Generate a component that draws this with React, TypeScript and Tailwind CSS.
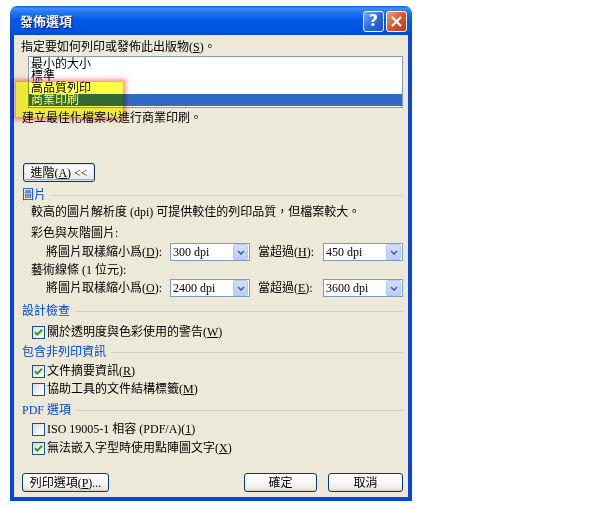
import type { ReactNode } from 'react'

const face = "font-['Liberation_Serif','Noto_Sans_CJK_TC',serif]"

function U({ children }: { children: ReactNode }) {
  return <span className="underline underline-offset-[1px]">{children}</span>
}

function XpButton({ children, className = '', focused = false }: { children: ReactNode; className?: string; focused?: boolean }) {
  return (
    <div
      className={`flex h-[19px] items-center justify-center rounded-[3px] border border-[#003C74] bg-[linear-gradient(to_bottom,#FFFFFF,#F6F6F2_55%,#ECEBE6_85%,#D6D0C5)] ${
        focused ? 'shadow-[inset_0_0_0_1px_#CEE7FF,inset_0_-2px_0_0_#89ADE4]' : ''
      } ${className}`}
    >
      {children}
    </div>
  )
}

function Heading({ children }: { children: ReactNode }) {
  return (
    <div className="flex h-[14px] items-center gap-[5px] text-[#0046D5]">
      <span>{children}</span>
      <div className="h-px flex-1 bg-[#D0D0BF]" />
    </div>
  )
}

function Check({ checked, children, className = '' }: { checked: boolean; children: ReactNode; className?: string }) {
  return (
    <div className={`flex h-[14px] items-center gap-[2px] pl-[10px] ${className}`}>
      <div className="flex h-[13px] w-[13px] items-center justify-center border border-[#1C5180] bg-[linear-gradient(135deg,#DCDCD7,#FFFFFF)]">
        {checked && (
          <svg width="11" height="11" viewBox="0 0 11 11">
            <path d="M2 5.2 L4.3 7.6 L9 2.8" fill="none" stroke="#21A121" strokeWidth="2" />
          </svg>
        )}
      </div>
      <span>{children}</span>
    </div>
  )
}

function Combo({ value }: { value: string }) {
  return (
    <div className="flex h-[18px] w-[80px] items-center border border-[#7F9DB9] bg-white">
      <span className="flex-1 pl-[2px]">{value}</span>
      <div className="mr-px flex h-[16px] w-[15px] items-center justify-center rounded-[2px] border border-[#B4C8F6] bg-[linear-gradient(to_bottom,#D2DFFD,#B9CEFA)]">
        <svg width="8" height="5" viewBox="0 0 8 5">
          <path d="M1 1 L4 4 L7 1" fill="none" stroke="#4D6185" strokeWidth="1.6" />
        </svg>
      </div>
    </div>
  )
}

function ResampleRow({ letter, from, over, overLetter }: { letter: string; from: string; over: string; overLetter: string }) {
  return (
    <div className="flex h-[18px] items-center pl-[24px]">
      <span className="w-[124px]">
        將圖片取樣縮小爲(<U>{letter}</U>):
      </span>
      <Combo value={from} />
      <span className="ml-[8px] w-[65px]">
        當超過(<U>{overLetter}</U>):
      </span>
      <Combo value={over} />
    </div>
  )
}

export default function App() {
  const items = ['最小的大小', '標準', '高品質列印', '商業印刷']

  return (
    <div className={`relative h-[508px] w-[616px] bg-white text-[12px] leading-[14px] text-black ${face}`}>
      <div className="ml-[10px] flex w-[402px] flex-col pt-[6px]">
        {/* title bar */}
        <div className="flex h-[29px] items-center rounded-t-[7px] bg-[linear-gradient(to_bottom,#0A5FE8_0%,#3D8EF9_8%,#2474F2_22%,#0058E6_50%,#0054E3_85%,#0046CE_100%)] pl-[10px] pr-[5px]">
          <span className="mt-[1px] flex-1 font-['Noto_Sans_CJK_TC',sans-serif] text-[13px] font-bold text-white [text-shadow:1px_1px_0_#0A1883]">
            發佈選項
          </span>
          <div className="mt-[1px] flex gap-[2px]">
            <div className="flex h-[21px] w-[21px] items-center justify-center rounded-[3px] border border-white bg-[linear-gradient(135deg,#7CA9FA,#2A66E2_55%,#1B4FD0)] font-['DejaVu_Sans',sans-serif] text-[16px] font-bold leading-none text-white">
              ?
            </div>
            <div className="flex h-[21px] w-[21px] items-center justify-center rounded-[3px] border border-white bg-[linear-gradient(135deg,#EE9B74,#DA5128_55%,#C23A18)]">
              <svg width="13" height="13" viewBox="0 0 13 13">
                <path d="M2 2 L11 11 M11 2 L2 11" stroke="white" strokeWidth="2.2" />
              </svg>
            </div>
          </div>
        </div>

        {/* body */}
        <div className="flex flex-col border-x-4 border-b-4 border-[#0A46DB] bg-[#ECE9D8] pb-[5px] pl-[8px] pr-[5px]">
          <div className="ml-[-1px] mt-[5px] h-[14px]">
            指定要如何列印或發佈此出版物(<U>S</U>)。
          </div>

          <div className="ml-[6px] mt-[2px] flex h-[52px] flex-col border border-[#7F9DB9] bg-white pt-px">
            {items.map((t, i) => (
              <div key={t} className={`h-[12px] pl-[2px] leading-[12px] ${i === 3 ? 'bg-[#316AC5] text-white' : ''}`}>
                {t}
              </div>
            ))}
          </div>

          <div className="mt-[3px] h-[14px]">建立最佳化檔案以進行商業印刷。</div>

          <XpButton focused className="ml-[1px] mt-[38px] h-[18px] w-[72px]">
            進階(<U>A</U>) &lt;&lt;
          </XpButton>

          <div className="mt-[6px]">
            <Heading>圖片</Heading>
          </div>
          <div className="mt-[3px] h-[14px] pl-[9px]">較高的圖片解析度 (dpi) 可提供較佳的列印品質，但檔案較大。</div>
          <div className="mt-[7px] h-[14px] pl-[9px]">彩色與灰階圖片:</div>
          <div className="mt-[3px]">
            <ResampleRow letter="D" from="300 dpi" overLetter="H" over="450 dpi" />
          </div>
          <div className="mt-[2px] h-[14px] pl-[9px]">藝術線條 (1 位元):</div>
          <div className="mt-[2px]">
            <ResampleRow letter="O" from="2400 dpi" overLetter="E" over="3600 dpi" />
          </div>

          <div className="mt-[7px]">
            <Heading>設計檢查</Heading>
          </div>
          <Check checked className="mt-[7px]">
            關於透明度與色彩使用的警告(<U>W</U>)
          </Check>

          <div className="mt-[6px]">
            <Heading>包含非列印資訊</Heading>
          </div>
          <Check checked className="mt-[5px]">
            文件摘要資訊(<U>R</U>)
          </Check>
          <Check checked={false} className="mt-[4px]">
            協助工具的文件結構標籤(<U>M</U>)
          </Check>

          <div className="mt-[7px]">
            <Heading>PDF 選項</Heading>
          </div>
          <Check checked={false} className="mt-[5px]">
            ISO 19005-1 相容 (PDF/A)(<U>1</U>)
          </Check>
          <Check checked className="mt-[5px]">
            無法嵌入字型時使用點陣圖文字(<U>X</U>)
          </Check>

          <div className="mt-[18px] flex items-center">
            <XpButton className="w-[87px]">
              列印選項(<U>P</U>)...
            </XpButton>
            <div className="flex-1" />
            <XpButton className="w-[73px]">確定</XpButton>
            <XpButton className="ml-[11px] w-[75px]">取消</XpButton>
          </div>
        </div>
      </div>

      {/* highlighter mark over the selected list item */}
      <div className="pointer-events-none absolute left-[16px] top-[82px] h-[35px] w-[107px] bg-[#FFFF46] mix-blend-multiply shadow-[0_0_4px_3px_rgba(255,70,70,0.55)]" />
    </div>
  )
}
